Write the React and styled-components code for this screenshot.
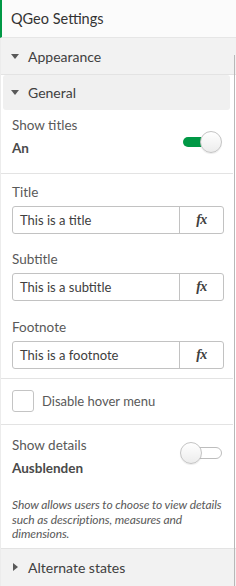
import React from "react";
import styled, { createGlobalStyle } from "styled-components";

const Global = createGlobalStyle`
  html, body { margin: 0; padding: 0; background: #ffffff; }
  * { box-sizing: border-box; }
`;

const Panel = styled.div`
  width: 236px;
  height: 586px;
  overflow: hidden;
  background: #ffffff;
  font-family: Lato, "Liberation Sans", sans-serif;
  color: #404040;
  display: flex;
  flex-direction: column;
`;

const Header = styled.div`
  height: 38px;
  flex: none;
  display: flex;
  align-items: center;
  padding-left: 9px;
  border-left: 2px solid #009845;
  border-bottom: 1px solid #e6e6e6;
  background: #fbfbfb;
  font-size: 14.5px;
  color: #333333;
`;

const Body = styled.div`
  position: relative;
  flex: 1;
  display: flex;
  flex-direction: column;
  border-left: 1px solid #ececec;
`;

const ScrollLine = styled.div`
  position: absolute;
  right: 1px;
  top: 17px;
  bottom: 0;
  width: 1px;
  background: #b8b8b8;
`;

const SectionHeader = styled.div`
  height: ${(p) => p.$h || 37}px;
  flex: none;
  display: flex;
  align-items: center;
  padding-left: 10px;
  gap: 9px;
  background: #f2f2f2;
  font-size: 14px;
  color: #404040;
  border-bottom: ${(p) => (p.$line ? "1px solid #e3e3e3" : "none")};
  border-top: ${(p) => (p.$top ? "1px solid #e3e3e3" : "none")};
`;

const SubHeader = styled(SectionHeader)`
  margin: 0 3px 0 2px;
  border-radius: 3px;
  background: #f0f0f0;
  padding-left: 8px;
`;

const Caret = styled.span`
  width: 0;
  height: 0;
  flex: none;
  ${(p) =>
    p.$right
      ? `border-top: 4px solid transparent; border-bottom: 4px solid transparent; border-left: 5px solid #595959; margin-left: 2px; margin-right: 1px;`
      : `border-left: 4px solid transparent; border-right: 4px solid transparent; border-top: 5px solid #595959;`}
`;

const Content = styled.div`
  display: flex;
  flex-direction: column;
  padding-right: 3px;
`;

const Group = styled.div`
  padding: ${(p) => p.$pad};
  padding-left: 11px;
  padding-right: 10px;
  display: flex;
  flex-direction: column;
  border-bottom: ${(p) => (p.$line ? "1px solid #e3e3e3" : "none")};
`;

const ToggleRow = styled.div`
  display: flex;
  align-items: center;
  justify-content: space-between;
`;

const Stack = styled.div`
  display: flex;
  flex-direction: column;
  gap: 5px;
`;

const Label = styled.div`
  font-size: 13.5px;
  line-height: 18px;
  color: #595959;
`;

const Value = styled.div`
  font-size: 13.5px;
  line-height: 18px;
  font-weight: 700;
  color: #4a4a4a;
`;

const Switch = styled.div`
  position: relative;
  width: 42px;
  height: 22px;
  margin-right: 1px;
  margin-top: ${(p) => p.$mt || 0}px;
`;

const Track = styled.div`
  position: absolute;
  left: ${(p) => (p.$on ? 3 : 8)}px;
  right: ${(p) => (p.$on ? 8 : 0)}px;
  top: 5px;
  height: ${(p) => (p.$on ? 10 : 12)}px;
  margin-top: ${(p) => (p.$on ? 1 : 0)}px;
  border-radius: 6px;
  background: ${(p) => (p.$on ? "#009845" : "#ffffff")};
  border: ${(p) => (p.$on ? "none" : "1px solid #bdbdbd")};
`;

const Knob = styled.div`
  position: absolute;
  top: 0;
  ${(p) => (p.$on ? "right: 0;" : "left: 0;")}
  width: 22px;
  height: 22px;
  border-radius: 50%;
  background: linear-gradient(#ffffff, #ececec);
  border: 1px solid #c4c4c4;
  box-shadow: 0 1px 1px rgba(0, 0, 0, 0.08);
`;

const Field = styled.div`
  display: flex;
  flex-direction: column;
  gap: 5px;
  margin-bottom: ${(p) => p.$mb || 0}px;
`;

const InputBox = styled.div`
  display: flex;
  height: 28px;
  width: 212px;
  border: 1px solid #c2c2c2;
  border-radius: 3px;
  background: #ffffff;
`;

const InputText = styled.div`
  flex: 1;
  display: flex;
  align-items: center;
  padding-left: 7px;
  font-size: 13px;
  color: #404040;
`;

const FxButton = styled.div`
  width: 44px;
  flex: none;
  display: flex;
  align-items: center;
  justify-content: center;
  border-left: 1px solid #c2c2c2;
  font-family: "Liberation Serif", "DejaVu Serif", serif;
  font-style: italic;
  font-weight: 700;
  font-size: 14px;
  color: #404040;
  letter-spacing: -0.5px;
`;

const CheckRow = styled.label`
  display: flex;
  align-items: center;
  gap: 8px;
  font-size: 13px;
  color: #595959;
`;

const Box = styled.span`
  width: 22px;
  height: 22px;
  flex: none;
  border: 1px solid #c4c4c4;
  border-radius: 3px;
  background: #ffffff;
`;

const Help = styled.div`
  margin-top: 21px;
  font-size: 12px;
  line-height: 14.5px;
  font-style: italic;
  color: #595959;
  white-space: nowrap;
  letter-spacing: -0.1px;
`;

function TextField({ label, value, mb }) {
  return (
    <Field $mb={mb}>
      <Label>{label}</Label>
      <InputBox>
        <InputText>{value}</InputText>
        <FxButton>fx</FxButton>
      </InputBox>
    </Field>
  );
}

export default function App() {
  return (
    <>
      <Global />
      <Panel>
        <Header>QGeo Settings</Header>
        <Body>
          <SectionHeader $line $h={37}>
            <Caret />
            Appearance
          </SectionHeader>
          <Content>
            <SubHeader $h={35}>
              <Caret />
              General
            </SubHeader>
            <Group $pad="6px 0 16px" $line>
              <ToggleRow>
                <Stack>
                  <Label>Show titles</Label>
                  <Value>An</Value>
                </Stack>
                <Switch $on $mt={10}>
                  <Track $on />
                  <Knob $on />
                </Switch>
              </ToggleRow>
            </Group>
            <Group $pad="9px 0 9px" $line>
              <TextField label="Title" value="This is a title" mb={16} />
              <TextField label="Subtitle" value="This is a subtitle" mb={17} />
              <TextField label="Footnote" value="This is a footnote" />
            </Group>
            <Group $pad="11px 0 12px" $line>
              <CheckRow>
                <Box />
                Disable hover menu
              </CheckRow>
            </Group>
            <Group $pad="11px 0 6px">
              <ToggleRow>
                <Stack>
                  <Label>Show details</Label>
                  <Value>Ausblenden</Value>
                </Stack>
                <Switch $mt={-8}>
                  <Track />
                  <Knob />
                </Switch>
              </ToggleRow>
              <Help>
                Show allows users to choose to view details
                <br />
                such as descriptions, measures and
                <br />
                dimensions.
              </Help>
            </Group>
          </Content>
          <SectionHeader $top $h={38}>
            <Caret $right />
            Alternate states
          </SectionHeader>
          <ScrollLine />
        </Body>
      </Panel>
    </>
  );
}
